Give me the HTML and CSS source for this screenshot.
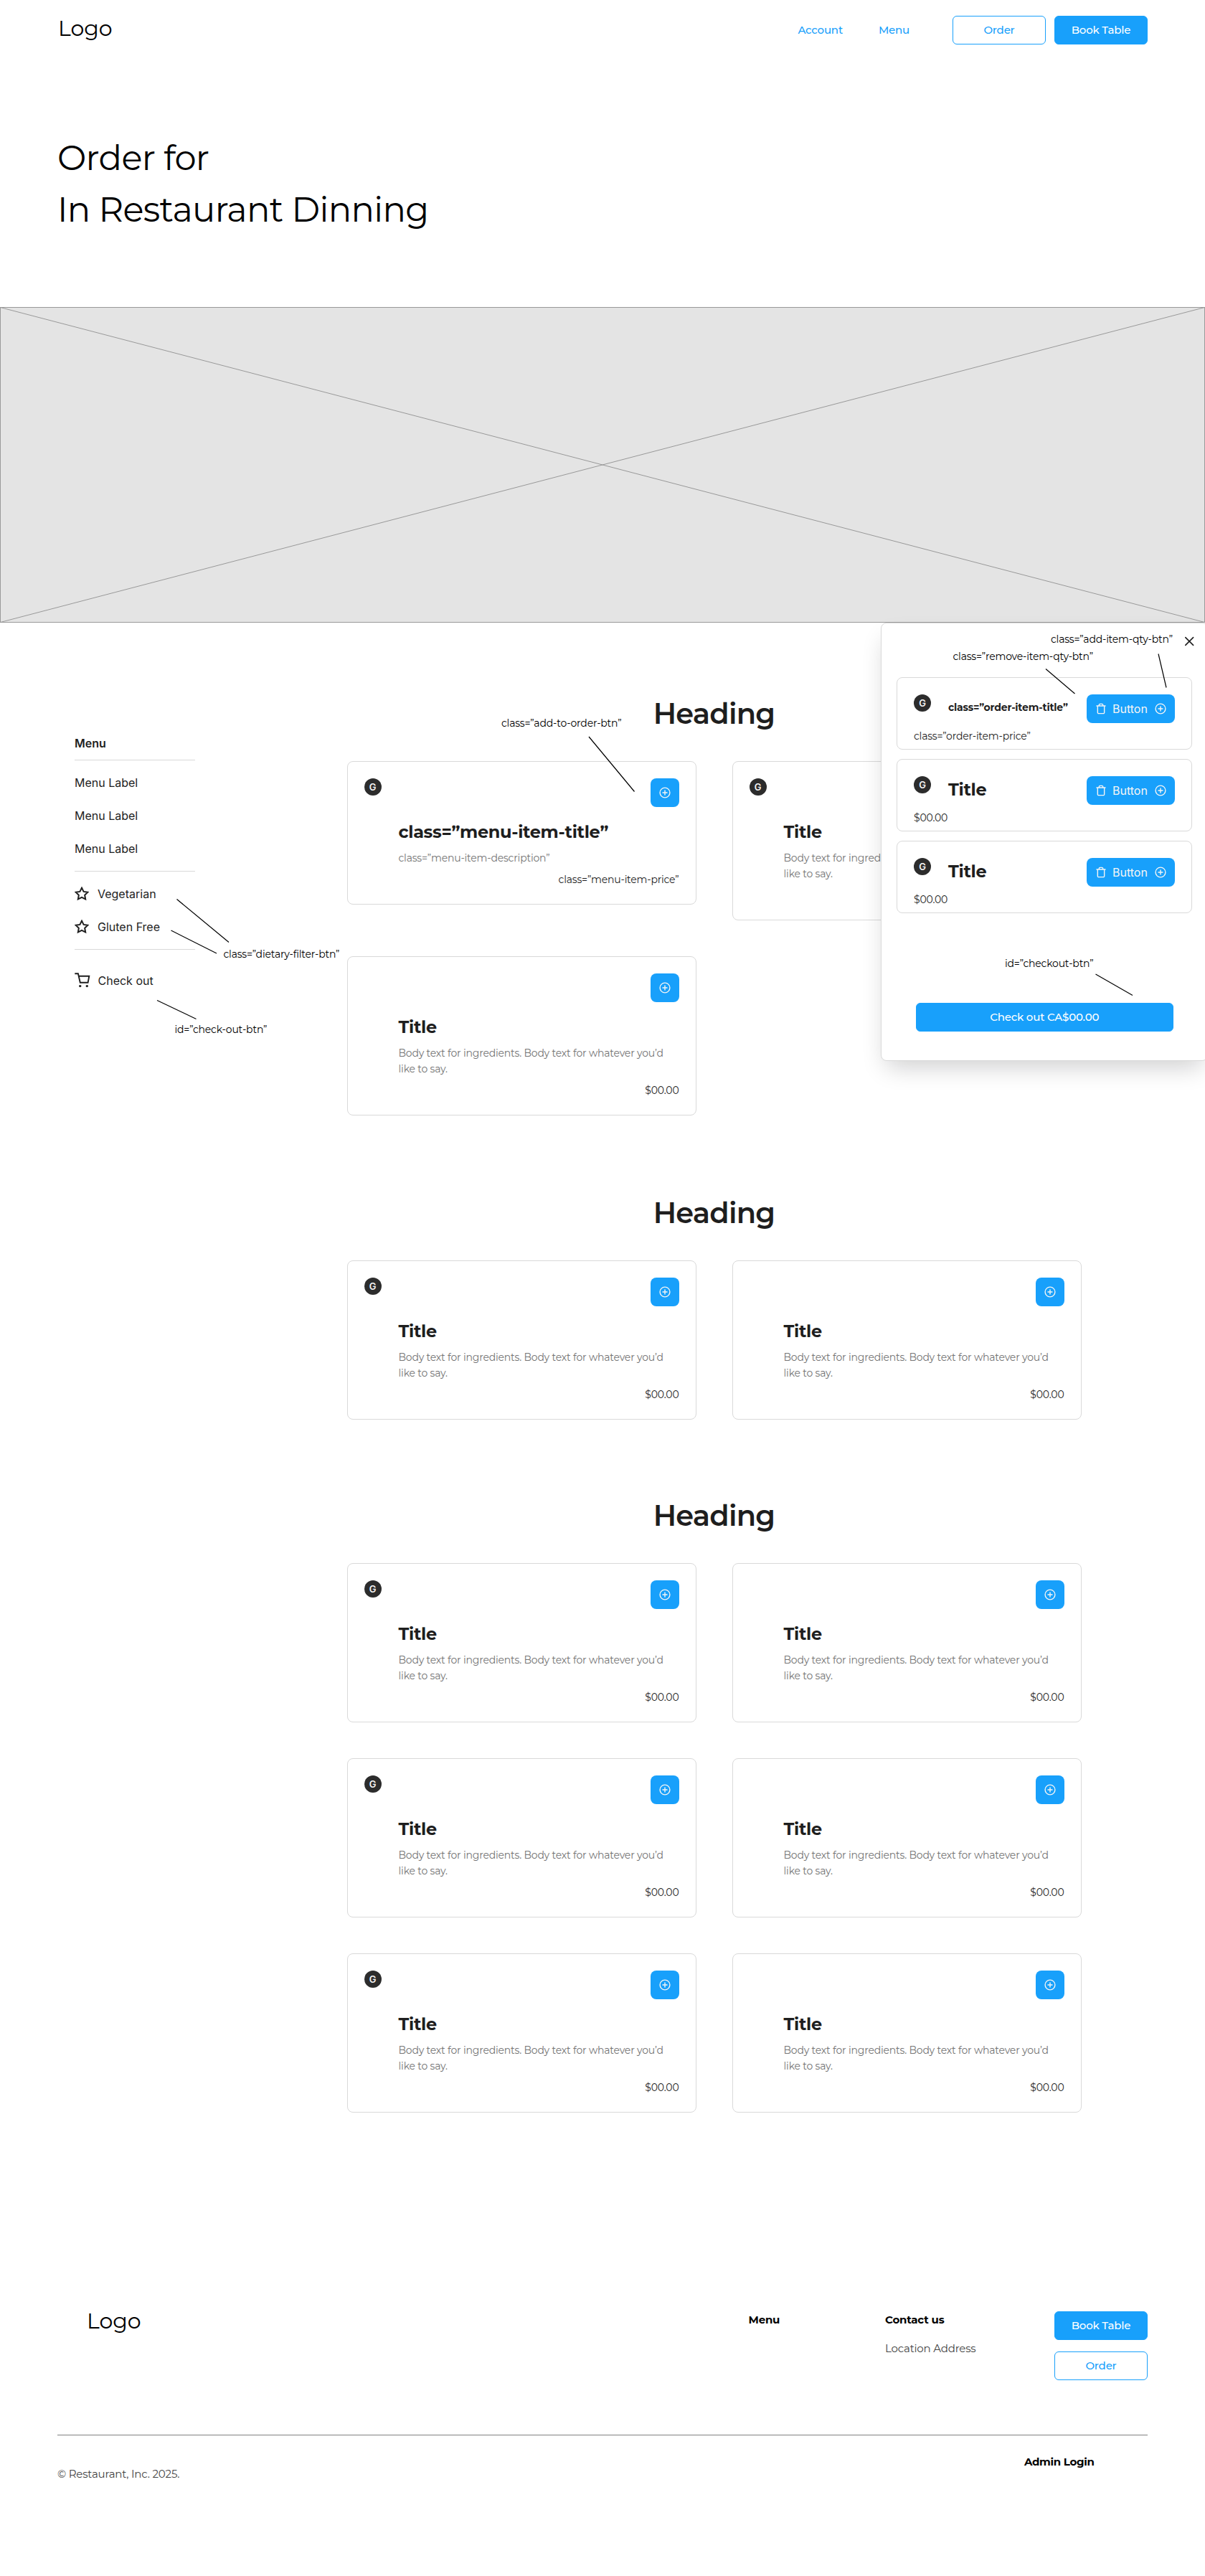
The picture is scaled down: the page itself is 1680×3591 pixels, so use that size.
FILE: index.html
```html
<!DOCTYPE html>
<html lang="en">
<head>
<meta charset="utf-8">
<title>Order for In Restaurant Dinning</title>
<link rel="stylesheet" href="styles.css">
</head>
<body>
<svg class="sprite" aria-hidden="true">
  <symbol id="i-plus" viewBox="0 0 16 16"><circle cx="8" cy="8" r="6.9"/><path d="M8 5v6M5 8h6"/></symbol>
  <symbol id="i-trash" viewBox="0 0 16 16"><path d="M2 4h12M12.67 4v9.33a1.33 1.33 0 0 1-1.34 1.34H4.67a1.33 1.33 0 0 1-1.34-1.34V4m2 0V2.67a1.33 1.33 0 0 1 1.34-1.34h2.66a1.33 1.33 0 0 1 1.34 1.34V4"/></symbol>
  <symbol id="i-star" viewBox="0 0 24 24"><path d="M12 2l3.09 6.26L22 9.27l-5 4.87 1.18 6.88L12 17.77l-6.18 3.25L7 14.14 2 9.27l6.91-1.01z"/></symbol>
  <symbol id="i-cart" viewBox="0 0 22 22"><path d="M.3 1.2h4.6l2.9 12.6h10.8l1.7-9.1H5.8"/><circle class="wheel" cx="7.7" cy="18.6" r="1.7"/><circle class="wheel" cx="17.3" cy="18.6" r="1.7"/></symbol>
</svg>
<div class="page">
  <header class="header">
    <div class="logo">Logo</div>
    <nav class="nav">
      <a class="nav-link">Account</a>
      <a class="nav-link">Menu</a>
    </nav>
    <div class="header-actions">
      <a class="btn btn-outline">Order</a>
      <a class="btn btn-primary">Book Table</a>
    </div>
  </header>

  <h1 class="hero-title">Order for<br>In Restaurant Dinning</h1>

  <svg class="hero-image" width="1680" height="440" viewBox="0 0 1680 440">
    <rect x=".5" y=".5" width="1679" height="439" fill="#e4e4e4" stroke="#999"/>
    <path d="M.5.5l1679 439M.5 439.5L1679.5.5" stroke="#999"/>
  </svg>

  <main class="main">
    <aside class="sidebar">
      <div class="side-title">Menu</div>
      <hr class="rule">
      <div class="side-item">Menu Label</div>
      <div class="side-item">Menu Label</div>
      <div class="side-item">Menu Label</div>
      <hr class="rule">
      <div class="side-item"><svg class="star"><use href="#i-star"/></svg>Vegetarian</div>
      <div class="side-item"><svg class="star"><use href="#i-star"/></svg>Gluten Free</div>
      <hr class="rule rule-last">
      <div class="side-item" id="check-out-btn"><svg class="cart"><use href="#i-cart"/></svg>Check out</div>
    </aside>

    <div class="sections">
      <section class="section section-first">
        <h2 class="heading">Heading</h2>
        <div class="cards">
          <article class="card">
            <span class="badge">G</span>
            <div class="card-body">
              <button class="add"><svg class="icon"><use href="#i-plus"/></svg></button>
              <h3 class="title">class=”menu-item-title”</h3>
              <p class="desc">class=”menu-item-description”</p>
              <p class="price">class=”menu-item-price”</p>
            </div>
          </article>
          <article class="card">
            <span class="badge">G</span>
            <div class="card-body">
              <button class="add"><svg class="icon"><use href="#i-plus"/></svg></button>
              <h3 class="title">Title</h3>
              <p class="desc">Body text for ingredients. Body text for whatever you’d like to say.</p>
              <p class="price">$00.00</p>
            </div>
          </article>
          <article class="card">
            <div class="card-body">
              <button class="add"><svg class="icon"><use href="#i-plus"/></svg></button>
              <h3 class="title">Title</h3>
              <p class="desc">Body text for ingredients. Body text for whatever you’d like to say.</p>
              <p class="price">$00.00</p>
            </div>
          </article>
        </div>
      </section>

      <section class="section">
        <h2 class="heading">Heading</h2>
        <div class="cards">
          <article class="card">
            <span class="badge">G</span>
            <div class="card-body">
              <button class="add"><svg class="icon"><use href="#i-plus"/></svg></button>
              <h3 class="title">Title</h3>
              <p class="desc">Body text for ingredients. Body text for whatever you’d like to say.</p>
              <p class="price">$00.00</p>
            </div>
          </article>
          <article class="card">
            <div class="card-body">
              <button class="add"><svg class="icon"><use href="#i-plus"/></svg></button>
              <h3 class="title">Title</h3>
              <p class="desc">Body text for ingredients. Body text for whatever you’d like to say.</p>
              <p class="price">$00.00</p>
            </div>
          </article>
        </div>
      </section>

      <section class="section">
        <h2 class="heading">Heading</h2>
        <div class="cards">
          <article class="card">
            <span class="badge">G</span>
            <div class="card-body">
              <button class="add"><svg class="icon"><use href="#i-plus"/></svg></button>
              <h3 class="title">Title</h3>
              <p class="desc">Body text for ingredients. Body text for whatever you’d like to say.</p>
              <p class="price">$00.00</p>
            </div>
          </article>
          <article class="card">
            <div class="card-body">
              <button class="add"><svg class="icon"><use href="#i-plus"/></svg></button>
              <h3 class="title">Title</h3>
              <p class="desc">Body text for ingredients. Body text for whatever you’d like to say.</p>
              <p class="price">$00.00</p>
            </div>
          </article>
          <article class="card">
            <span class="badge">G</span>
            <div class="card-body">
              <button class="add"><svg class="icon"><use href="#i-plus"/></svg></button>
              <h3 class="title">Title</h3>
              <p class="desc">Body text for ingredients. Body text for whatever you’d like to say.</p>
              <p class="price">$00.00</p>
            </div>
          </article>
          <article class="card">
            <div class="card-body">
              <button class="add"><svg class="icon"><use href="#i-plus"/></svg></button>
              <h3 class="title">Title</h3>
              <p class="desc">Body text for ingredients. Body text for whatever you’d like to say.</p>
              <p class="price">$00.00</p>
            </div>
          </article>
          <article class="card">
            <span class="badge">G</span>
            <div class="card-body">
              <button class="add"><svg class="icon"><use href="#i-plus"/></svg></button>
              <h3 class="title">Title</h3>
              <p class="desc">Body text for ingredients. Body text for whatever you’d like to say.</p>
              <p class="price">$00.00</p>
            </div>
          </article>
          <article class="card">
            <div class="card-body">
              <button class="add"><svg class="icon"><use href="#i-plus"/></svg></button>
              <h3 class="title">Title</h3>
              <p class="desc">Body text for ingredients. Body text for whatever you’d like to say.</p>
              <p class="price">$00.00</p>
            </div>
          </article>
        </div>
      </section>
    </div>

    <div class="panel">
      <div class="panel-head">
        <svg class="close" viewBox="0 0 24 24"><path d="M6.8 6.6l10.8 10.8M17.6 6.6L6.8 17.4"/></svg>
      </div>
      <div class="order-list">
        <div class="order-item">
          <div class="order-row">
            <span class="badge">G</span>
            <h3 class="title order-title order-title-small">class=”order-item-title”</h3>
            <div class="qty"><svg class="icon"><use href="#i-trash"/></svg><span class="qty-label">Button</span><svg class="icon"><use href="#i-plus"/></svg></div>
          </div>
          <p class="order-price">class=”order-item-price”</p>
        </div>
        <div class="order-item">
          <div class="order-row">
            <span class="badge">G</span>
            <h3 class="title order-title">Title</h3>
            <div class="qty"><svg class="icon"><use href="#i-trash"/></svg><span class="qty-label">Button</span><svg class="icon"><use href="#i-plus"/></svg></div>
          </div>
          <p class="order-price">$00.00</p>
        </div>
        <div class="order-item">
          <div class="order-row">
            <span class="badge">G</span>
            <h3 class="title order-title">Title</h3>
            <div class="qty"><svg class="icon"><use href="#i-trash"/></svg><span class="qty-label">Button</span><svg class="icon"><use href="#i-plus"/></svg></div>
          </div>
          <p class="order-price">$00.00</p>
        </div>
      </div>
      <a class="btn btn-primary checkout" id="checkout-btn">Check out CA$00.00</a>
    </div>
  </main>

  <footer class="footer">
    <div class="footer-top">
      <div class="logo footer-logo">Logo</div>
      <div class="footer-heading">Menu</div>
      <div class="footer-col">
        <div class="footer-heading">Contact us</div>
        <div class="footer-text">Location Address</div>
      </div>
      <div class="footer-col">
        <a class="btn btn-primary">Book Table</a>
        <a class="btn btn-outline">Order</a>
      </div>
    </div>
    <div class="footer-bottom">
      <div class="footer-text copyright">© Restaurant, Inc. 2025.</div>
      <div class="footer-heading admin">Admin Login</div>
    </div>
  </footer>

  <div class="notes">
    <svg class="note-lines" width="1680" height="3591" viewBox="0 0 1680 3591">
      <path d="M246.5 1253.5L319 1313.5M238.5 1297L302 1329M219 1394.5L273.5 1420.5M821 1027L884.5 1103.5M1458 932.5L1498.5 967M1615 911.5L1626 958.5M1527.5 1358L1579 1387.5"/>
    </svg>
    <span class="note note-diet">class=”dietary-filter-btn”</span>
    <span class="note note-check-out">id=”check-out-btn”</span>
    <span class="note note-add-order">class=”add-to-order-btn”</span>
    <span class="note note-add-qty">class=”add-item-qty-btn”</span>
    <span class="note note-remove-qty">class=”remove-item-qty-btn”</span>
    <span class="note note-checkout">id=”checkout-btn”</span>
  </div>
</div>
</body>
</html>
```
FILE: styles.css
```css
* { box-sizing: border-box; }

body {
  margin: 0;
  background: #fff;
  color: #1e1e1e;
  font: 400 14px/22px "Montserrat", "Inter", sans-serif;
  letter-spacing: -0.014em;
}

h1, h2, h3, p { margin: 0; }

.sprite { display: none; }

.page {
  position: relative;
  width: 1680px;
  height: 3591px;
  overflow: hidden;
}

/* Header */
.header {
  display: flex;
  align-items: flex-start;
  height: 84px;
  padding: 22px 80px;
}

.logo {
  padding-left: 1px;
  color: #000;
  font-size: 30px;
  line-height: 36px;
  letter-spacing: 0;
}

.nav {
  display: flex;
  gap: 50px;
  margin: 0 60px 0 auto;
}

.nav-link {
  color: #18a0fb;
  font-size: 15px;
  font-weight: 500;
  line-height: 40px;
}

.header-actions { display: flex; gap: 12px; }

.btn {
  display: block;
  width: 130px;
  height: 40px;
  border: 1px solid #18a0fb;
  border-radius: 6px;
  font-size: 15px;
  font-weight: 500;
  line-height: 38px;
  text-align: center;
}

.btn-primary { background: #18a0fb; color: #fff; }
.btn-outline { background: #fff; color: #18a0fb; }

/* Hero */
.hero-title {
  padding: 100px 80px;
  color: #000;
  font-size: 48px;
  font-weight: 400;
  line-height: 72px;
  letter-spacing: -0.014em;
}

.hero-image { display: block; }

/* Menu */
.main {
  position: relative;
  display: flex;
  align-items: flex-start;
  gap: 211.5px;
  padding: 103px 0 0 104px;
}

.sidebar {
  width: 168px;
  padding-top: 53px;
  font: 400 16px/24px "Inter", sans-serif;
  letter-spacing: 0;
}

.side-title { font-weight: 600; margin-bottom: 11px; }

.rule {
  height: 1px;
  margin: 8px 0;
  border: 0;
  background: #d9d9d9;
}

.rule-last { margin-bottom: 20px; }

.side-item {
  display: flex;
  align-items: center;
  height: 46px;
}

.star, .cart {
  fill: none;
  stroke: #1e1e1e;
}

.star {
  width: 20px;
  height: 20px;
  margin: 0 12px 1px 0;
  stroke-width: 2.4;
}

.cart {
  width: 22px;
  height: 22px;
  margin-right: 10.5px;
  stroke-width: 1.9;
}

.wheel { fill: #1e1e1e; stroke: none; }

.sections { width: 1024px; }

.section { margin-bottom: 110px; }
.section-first { margin-bottom: 112px; }

.heading {
  margin-bottom: 42px;
  font-size: 40px;
  font-weight: 600;
  line-height: 48px;
  letter-spacing: -0.02em;
  text-align: center;
}

.cards {
  display: grid;
  grid-template-columns: 1fr 1fr;
  align-items: start;
  gap: 50px;
}

.card {
  display: grid;
  grid-template-columns: 24px 1fr;
  column-gap: 24px;
  padding: 23px;
  border: 1px solid #d9d9d9;
  border-radius: 8px;
  background: #fff;
}

.card-body {
  grid-column: 2;
  display: flex;
  flex-direction: column;
}

.badge {
  width: 24px;
  height: 24px;
  border-radius: 50%;
  background: #2c2c2c;
  color: #f5f5f5;
  font: 600 13px/24px "Inter", sans-serif;
  letter-spacing: 0;
  text-align: center;
}

.add {
  display: flex;
  align-items: center;
  justify-content: center;
  align-self: flex-end;
  width: 40px;
  height: 40px;
  margin-bottom: 20px;
  padding: 0;
  border: 0;
  border-radius: 8px;
  background: #18a0fb;
}

.icon {
  width: 16px;
  height: 16px;
  fill: none;
  stroke: #f5f5f5;
  stroke-width: 1.4;
  stroke-linecap: round;
  stroke-linejoin: round;
}

.title {
  font-size: 24px;
  font-weight: 700;
  line-height: 29px;
  letter-spacing: -0.014em;
}

.desc { margin-top: 11px; color: #757575; }
.price { margin-top: 8px; text-align: right; }

/* Order panel */
.panel {
  position: absolute;
  top: 0;
  left: 1228px;
  width: 456px;
  height: 611px;
  padding: 0 21px;
  border: 1px solid #d9d9d9;
  border-radius: 8px;
  background: #fff;
  box-shadow: 0 16px 32px -8px rgba(12, 12, 13, 0.2);
}

.panel-head {
  display: flex;
  justify-content: flex-end;
  height: 75px;
  padding-top: 13px;
  margin-right: -8px;
}

.close {
  width: 24px;
  height: 24px;
  fill: none;
  stroke: #1e1e1e;
  stroke-width: 1.6;
  stroke-linecap: round;
}

.order-list { display: grid; gap: 13px; }

.order-item {
  height: 101px;
  padding: 23px;
  border: 1px solid #d9d9d9;
  border-radius: 8px;
}

.order-row { display: flex; height: 40px; }
.order-title { margin: 4px 0 0 24px; }
.order-title-small { font-size: 14px; }
.order-price { margin-top: 7px; }

.qty {
  display: flex;
  align-items: center;
  gap: 8px;
  width: 123px;
  margin-left: auto;
  padding: 0 12px;
  border-radius: 8px;
  background: #18a0fb;
  color: #f5f5f5;
  font: 400 16px/24px "Inter", sans-serif;
  letter-spacing: 0;
}

.qty-label { width: 51px; }

.checkout { width: 359.5px; margin: 125px 0 0 26.5px; }

/* Footer */
.footer {
  position: relative;
  padding: 277px 80px 0;
  margin-top: -110px;
}

.footer-top {
  display: grid;
  grid-template-columns: 1fr 190.5px 236px 130px;
  align-items: start;
  height: 172px;
  padding-left: 40px;
}

.footer-logo { margin-top: -4px; }

.footer-col { display: grid; gap: 16px; }

.footer-heading, .footer-text {
  font-size: 15px;
  line-height: 24px;
}

.footer-heading { color: #000; font-weight: 700; }
.footer-text { color: #454545; }

.footer-bottom {
  display: flex;
  justify-content: space-between;
  border-top: 1px solid #808080;
  padding-top: 25px;
}

.copyright { margin-top: 17px; }
.admin { margin-right: 74.5px; letter-spacing: -0.02em; }

/* Annotations pinned over the wireframe */
.notes { position: absolute; inset: 0; color: #000; pointer-events: none; }
.note-lines { display: block; fill: none; stroke: #000; stroke-width: 1.2; }
.note { position: absolute; white-space: nowrap; }
.note-diet { left: 311.5px; top: 1319px; }
.note-check-out { left: 243.5px; top: 1424px; }
.note-add-order { left: 699px; top: 997px; }
.note-add-qty { left: 1465px; top: 880px; }
.note-remove-qty { left: 1328.5px; top: 904px; }
.note-checkout { left: 1401px; top: 1332px; }
```
